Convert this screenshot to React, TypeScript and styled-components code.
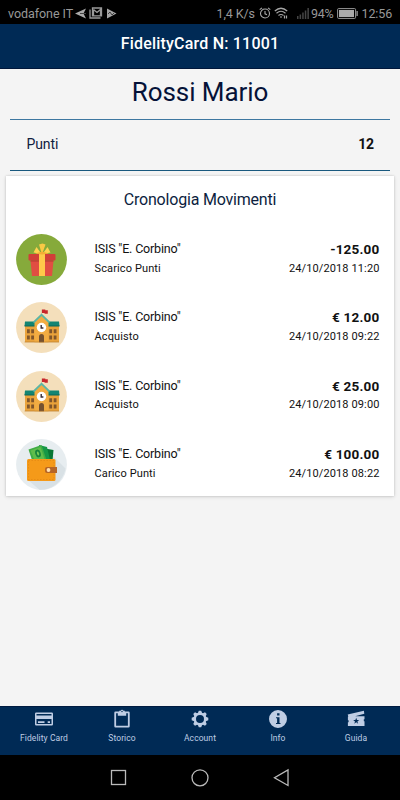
import React from "react";
import styled, { createGlobalStyle } from "styled-components";

const GlobalStyle = createGlobalStyle`
  * { box-sizing: border-box; }
  body { margin: 0; font-family: Roboto, sans-serif; background: #f4f4f4; }
  svg { display: block; flex: none; }
`;

const Screen = styled.div`
  display: flex;
  flex-direction: column;
  width: 400px;
  height: 800px;
  overflow: hidden;
  background: #f4f4f4;
`;

const StatusBar = styled.div`
  display: flex;
  align-items: center;
  flex: none;
  height: 24px;
  padding: 2px 8px 0;
  background: #000;
  color: #989898;
  font-size: 12.5px;
  white-space: nowrap;
`;

const StatusText = styled.span<{ $width: number; $spacing?: number }>`
  width: ${(p) => p.$width}px;
  letter-spacing: ${(p) => p.$spacing ?? 0}px;
`;

const Spacer = styled.div`
  flex: 1;
`;

const Header = styled.header`
  flex: none;
  height: 45px;
  padding-top: 10px;
  border-bottom: 1px solid #00173b;
  background: #002a55;
  color: #fff;
  font-size: 16px;
  font-weight: 500;
  line-height: 20px;
  letter-spacing: 0.2px;
  text-align: center;
`;

const Content = styled.main`
  flex: 1;
  display: flex;
  flex-direction: column;
`;

const Holder = styled.h1`
  margin: 0 10px;
  height: 51px;
  padding-top: 6px;
  border-bottom: 1px solid #3d77a0;
  color: #051238;
  font-size: 26px;
  font-weight: 400;
  line-height: 34px;
  letter-spacing: -0.08px;
  text-align: center;
`;

const Points = styled.div`
  display: flex;
  justify-content: space-between;
  align-items: center;
  margin: 0 10px;
  height: 51px;
  padding: 0 16px 2px 16.5px;
  border-bottom: 1px solid #19587e;
  color: #10203f;
  font-size: 14px;
  letter-spacing: -0.1px;
`;

const PointsValue = styled.strong`
  color: #111;
  font-weight: 700;
`;

const Card = styled.section`
  margin: 5px 6px 0;
  height: 320px;
  background: #fff;
  box-shadow: 0 0 2px rgba(0, 0, 0, 0.16), 0 1px 4px rgba(0, 0, 0, 0.12);
`;

const CardTitle = styled.h2`
  margin: 0;
  padding-top: 14px;
  height: 49px;
  color: #0c1e40;
  font-size: 16px;
  font-weight: 400;
  line-height: 20px;
  letter-spacing: -0.2px;
  text-align: center;
`;

const Movement = styled.div`
  display: flex;
  height: 68.3px;
  padding: 9px 14.5px 0 10px;
  color: #111;
`;

const Column = styled.div<{ $end?: boolean }>`
  display: flex;
  flex-direction: column;
  align-items: ${(p) => (p.$end ? "flex-end" : "flex-start")};
  margin-left: ${(p) => (p.$end ? "auto" : "27.5px")};
  padding-top: 5.2px;
`;

const Place = styled.div`
  font-size: 12.5px;
  line-height: 20px;
  letter-spacing: -0.18px;
`;

const Amount = styled.div`
  font-size: 13.5px;
  font-weight: 700;
  line-height: 20px;
  letter-spacing: 0.2px;
`;

const Detail = styled.div`
  margin-top: 0.6px;
  font-size: 11px;
  line-height: 18px;
  letter-spacing: 0.12px;
`;

const TabBar = styled.nav`
  display: grid;
  grid-template-columns: repeat(5, 78px);
  justify-content: center;
  flex: none;
  height: 49px;
  border-top: 1px solid #001b40;
  background: #002a55;
  color: #bfcde4;
`;

const Tab = styled.div`
  display: flex;
  flex-direction: column;
  align-items: center;
  padding-top: 2px;
  font-size: 8.5px;
  line-height: 12px;
  letter-spacing: 0.08px;
  gap: 3px;
`;

const SystemNav = styled.div`
  display: flex;
  justify-content: center;
  align-items: center;
  gap: 61px;
  flex: none;
  height: 45px;
  background: #000;
`;

const StatusIcon = styled.svg<{ $gap: number }>`
  margin-right: ${(p) => p.$gap}px;
`;

const GiftIcon = () => (
  <svg width="51" height="51" viewBox="0 0 51 51">
    <circle cx="25.5" cy="25.5" r="25.4" fill="#86aa3b" />
    <path d="M25.500 20 17.500 18.500 20.500 13ZM26.500 20 34.500 18.500 31.500 13Z" fill="#ffd34f" />
    <path d="M26 20.500 23 10.500 26.500 9.500 29.500 10.500Z" fill="#f9c945" />
    <path d="M14.500 26.500h23L36 42H16Z" fill="#e04e42" />
    <rect x="12.500" y="20" width="27" height="6.500" rx="1" fill="#d13f38" />
    <path d="M14.500 26.500h23v1h-23Z" fill="#b63931" />
    <path d="M23 20h6v22h-6Z" fill="#ffc94a" />
    <path d="M19 19.500 26 17.500 33 19.500 26 20.500Z" fill="#f2ae35" />
  </svg>
);

const SchoolIcon = () => (
  <svg width="51" height="51" viewBox="0 0 51 51">
    <circle cx="25.500" cy="25.500" r="25.400" fill="#f4dfbb" />
    <path d="M25.500 7.500v6" stroke="#d9c7a5" strokeWidth=".8" />
    <path d="M26 7.500h3.300v.8h2.500v3.400h-3l-.5-.7H26Z" fill="#c7252b" />
    <rect x="9" y="23" width="34" height="17.200" fill="#e9a23b" />
    <path d="M9 19.500h34l.5 4.500h-35Z" fill="#138573" />
    <path d="M8.500 23.500h35v1h-35Z" fill="#0b695a" />
    <path d="M18.500 20.500 25.500 13.500 32.500 20.500V40.200h-14Z" fill="#f2ac42" />
    <path d="M17.500 20.500 25.500 12.800 33.500 20.500" fill="none" stroke="#5db5a3" strokeWidth="1.800" />
    <circle cx="25.500" cy="25.500" r="4.700" fill="#fff" />
    <path d="M25.200 23v3h2.200" fill="none" stroke="#382c35" strokeWidth="1.400" />
    <path d="M11 27.300h2.800v4H11zM15.200 27.300H18v4h-2.800zM11 33.500h2.800v4H11zM15.200 33.500H18v4h-2.800zM33.300 27.300h2.800v4h-2.800zM37.700 27.300h2.800v4h-2.800zM33.300 33.500h2.800v4h-2.800zM37.700 33.500h2.800v4h-2.800z" fill="#80552a" />
    <path d="M23 40.200V34.500a2.500 2.500 0 0 1 5 0v5.700Z" fill="#745130" />
    <path d="M8.500 39.700h34.500v.6H8.500Z" fill="#a96f28" />
  </svg>
);

const WalletIcon = () => (
  <svg width="51" height="51" viewBox="0 0 51 51">
    <circle cx="25.500" cy="25.500" r="25.400" fill="#e7edf0" />
    <path d="m37 17 12.500 12.500a25.400 25.400 0 0 1-26 21.200L12 41Z" fill="#d9e1e5" />
    <path d="m26 9 11.500 2-1 11H26Z" fill="#087634" />
    <path d="m23 6 8 2 3 13H22Z" fill="#159746" />
    <path d="m12.500 10.500 13-4.500 5 15H16Z" fill="#3fac45" />
    <path d="m14.500 11.500 10-3.500 4 12H18Z" fill="#5fbd4b" />
    <ellipse cx="22" cy="14.500" rx="2.700" ry="4" transform="rotate(-18 22 14.500)" fill="#17853c" />
    <ellipse cx="22" cy="14.500" rx="1" ry="2" transform="rotate(-18 22 14.500)" fill="#79ca58" />
    <rect x="11" y="20" width="28.500" height="22" rx="1.500" fill="#f59a19" />
    <rect x="12.500" y="21.500" width="25.500" height="19" fill="none" stroke="#e48812" strokeWidth=".7" strokeDasharray="1.500 1.500" />
    <path d="M31 28h10v6H31a2 2 0 0 1-2-2v-2a2 2 0 0 1 2-2Z" fill="#b56527" />
    <circle cx="32.500" cy="31" r="1.900" fill="#ffe1b2" />
  </svg>
);

const illustrations = { gift: GiftIcon, school: SchoolIcon, wallet: WalletIcon };

const movements: { icon: keyof typeof illustrations; detail: string; amount: string; date: string }[] = [
  { icon: "gift", detail: "Scarico Punti", amount: "-125.00", date: "24/10/2018 11:20" },
  { icon: "school", detail: "Acquisto", amount: "€ 12.00", date: "24/10/2018 09:22" },
  { icon: "school", detail: "Acquisto", amount: "€ 25.00", date: "24/10/2018 09:00" },
  { icon: "wallet", detail: "Carico Punti", amount: "€ 100.00", date: "24/10/2018 08:22" },
];

const gearTeeth = [0, 45, 90, 135, 180, 225, 270, 315];

const tabs = [
  {
    label: "Fidelity Card",
    icon: <path fillRule="evenodd" d="M2.200 3.500h15.600Q19 3.500 19 4.700v10.600q0 1.200-1.200 1.200H2.200Q1 16.500 1 15.300V4.700Q1 3.500 2.200 3.500Zm.3 1.500v1.500h15V5Zm0 5v5h15v-5ZM4 12.200h6.500v1.800H4Zm9.700 0h2.300v1.800h-2.300Z" />,
  },
  {
    label: "Storico",
    icon: <path fillRule="evenodd" d="M3.500 2.500h3.700V1.800h1.400A1.500 1.500 0 0 1 11.500 1.800h1.300v.7h3.700q1.200 0 1.200 1.200v13.600q0 1.200-1.200 1.200H3.500q-1.200 0-1.200-1.200V3.700q0-1.200 1.200-1.200Zm.6 1.700v12.600h11.800V4.200h-1.700v2.500H5.800V4.200Zm5.900-2.400a.7.7 0 1 0 0 1.400.7.7 0 0 0 0-1.400Z" />,
  },
  {
    label: "Account",
    icon: (
      <>
        <circle cx="10" cy="10" r="5.200" fill="none" stroke="currentColor" strokeWidth="2.400" />
        {gearTeeth.map((angle) => (
          <path key={angle} d="M7.600 4.800 8.800 1.700h2.400l1.200 3.100Z" transform={`rotate(${angle} 10 10)`} />
        ))}
      </>
    ),
  },
  {
    label: "Info",
    icon: <path fillRule="evenodd" d="M10 1a9 9 0 1 1 0 18 9 9 0 0 1 0-18Zm-.9 3.200v2.400h2.400V4.200ZM8 8.200v1h1.100v4.700H8V15h4.500v-1.100h-1V8.200Z" />,
  },
  {
    label: "Guida",
    icon: <path fillRule="evenodd" d="m1.700 5.600 16.200-3.800.4 3-9.200 2.500h9.400v3h-.7v2h.7V17H1.900v-3.700h.7v-2h-.7V7.800l.4-.2ZM10.200 8.800l-.8 2.200H7.200l1.800 1.400-.7 2.300 1.900-1.400 1.900 1.400-.7-2.300 1.800-1.400H11Z" />,
  },
];

export default function App() {
  return (
    <>
      <GlobalStyle />
      <Screen>
        <StatusBar>
          <StatusText $width={67} $spacing={-0.05}>vodafone IT</StatusText>
          <StatusIcon $gap={3} width="11" height="11" viewBox="0 0 11 11" fill="#aaa">
            <path d="M0 5.500 11 .5 8.500 5.500 11 10.500Z" /><path d="M5 5.500h6" stroke="#444" />
          </StatusIcon>
          <StatusIcon $gap={3} width="14" height="12" viewBox="0 0 14 12" fill="none" stroke="#999" strokeWidth="1.300">
            <path d="M1 2.500v8.500h10.500M3.500 1h9v7.800h-9ZM4.500 2.500 8 5.500l3.500-3v6M4.500 3v6" />
          </StatusIcon>
          <StatusIcon $gap={0} width="11" height="11" viewBox="0 0 11 11" fill="#a5a5a5">
            <path d="m1 .5 9.500 5-9.500 5Z" /><path d="m2 6 2-2 2 3 2-2" fill="none" stroke="#333" strokeWidth=".9" />
          </StatusIcon>
          <Spacer />
          <StatusText $width={42.500} $spacing={-0.1}>1,4 K/s</StatusText>
          <StatusIcon $gap={3} width="12" height="12" viewBox="0 0 12 12" fill="none" stroke="#aaa" strokeWidth="1.100">
            <circle cx="6" cy="6.500" r="4.500" /><path d="M6 4v2.800l2 1M.7 2.700 3 .8M11.300 2.700 9 .8" />
          </StatusIcon>
          <StatusIcon $gap={9} width="14" height="12" viewBox="0 0 14 12" fill="none" stroke="#a5a5a5" strokeWidth="1.200">
            <path d="M.8 4Q7-1.500 13.200 4M2.500 6.200Q7 2.300 11.500 6.200M4.500 8.500Q7 6.500 9.500 8.500" /><path d="M6 10h2M10.500 8.500v3M12.500 8.500v3" />
          </StatusIcon>
          <StatusIcon $gap={2} width="12" height="11" viewBox="0 0 12 11" fill="#454545">
            <path d="M0 8h1.500v3H0zM2.600 6.500h1.500V11H2.600zM5.200 4.500h1.500V11H5.200zM7.800 2.500h1.500V11H7.800zM10.400 0h1.500v11h-1.500z" />
          </StatusIcon>
          <StatusText $width={25.500} $spacing={-0.3}>94%</StatusText>
          <StatusIcon $gap={4} width="21" height="11" viewBox="0 0 21 11">
            <rect x=".6" y=".6" width="18" height="9.800" rx="1" fill="none" stroke="#999" />
            <path d="M2 2h15v7H2ZM19.500 3h1.200v5h-1.200Z" fill="#aaa" />
          </StatusIcon>
          <StatusText $width={30.500} $spacing={-0.1}>12:56</StatusText>
        </StatusBar>
        <Header>FidelityCard N: 11001</Header>
        <Content>
          <Holder>Rossi Mario</Holder>
          <Points>
            <span>Punti</span>
            <PointsValue>12</PointsValue>
          </Points>
          <Card>
            <CardTitle>Cronologia Movimenti</CardTitle>
            {movements.map((m) => {
              const Illustration = illustrations[m.icon];
              return (
                <Movement key={m.date}>
                  <Illustration />
                  <Column>
                    <Place>ISIS "E. Corbino"</Place>
                    <Detail>{m.detail}</Detail>
                  </Column>
                  <Column $end>
                    <Amount>{m.amount}</Amount>
                    <Detail>{m.date}</Detail>
                  </Column>
                </Movement>
              );
            })}
          </Card>
        </Content>
        <TabBar>
          {tabs.map((tab) => (
            <Tab key={tab.label}>
              <svg width="20" height="20" viewBox="0 0 20 20" fill="currentColor">{tab.icon}</svg>
              {tab.label}
            </Tab>
          ))}
        </TabBar>
        <SystemNav>
          <svg width="20" height="20" viewBox="0 0 20 20" fill="none" stroke="#bbb" strokeWidth="1.300"><rect x="2.500" y="2.500" width="14" height="14" /></svg>
          <svg width="20" height="20" viewBox="0 0 20 20" fill="none" stroke="#bbb" strokeWidth="1.300"><circle cx="10" cy="9.800" r="8" /></svg>
          <svg width="20" height="20" viewBox="0 0 20 20" fill="none" stroke="#bbb" strokeWidth="1.300"><path d="M17 2v15.500L3.500 9.800Z" /></svg>
        </SystemNav>
      </Screen>
    </>
  );
}
